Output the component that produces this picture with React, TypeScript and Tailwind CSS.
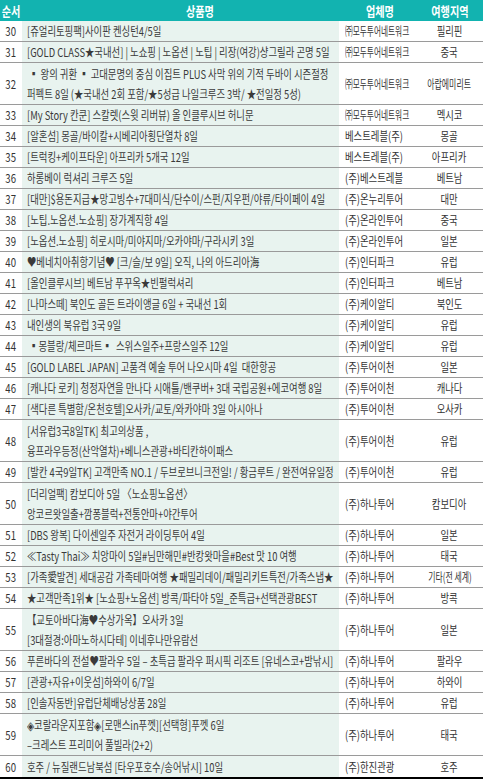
import React from 'react';

type Row = { n: number; t: string[]; c: string; r: string };

const rows: Row[] = [
    { n: 30, t: ['[쥬얼리토핑팩]사이판 켄싱턴4/5일'], c: '㈜모두투어네트워크', r: '필리핀' },
    { n: 31, t: ['[GOLD CLASS★국내선] | 노쇼핑 | 노옵션 | 노팁 | 리장(여강)샹그릴라 곤명 5일'], c: '㈜모두투어네트워크', r: '중국' },
    {
        n: 32,
        t: [' ▪ 왕의 귀환 ▪ 고대문명의 중심 이집트 PLUS 사막 위의 기적 두바이 시즌절정', '퍼펙트 8일 (★국내선 2회 포함/★5성급 나일크루즈 3박/ ★전일정 5성)'],
        c: '㈜모두투어네트워크',
        r: '아랍에미리트'
    },
    { n: 33, t: ['[My Story 칸쿤] 스칼렛(스윗 리버뷰) 올 인클루시브 허니문'], c: '㈜모두투어네트워크', r: '멕시코' },
    { n: 34, t: ['[알혼섬] 몽골/바이칼+시베리아횡단열차 8일'], c: '베스트레블(주)', r: '몽골' },
    { n: 35, t: ['[트럭킹+케이프타운] 아프리카 5개국 12일'], c: '베스트레블(주)', r: '아프리카' },
    { n: 36, t: ['하롱베이 럭셔리 크루즈 5일'], c: '(주)베스트레블', r: '베트남' },
    { n: 37, t: ['[대만]$용돈지급★망고빙수+7대미식/단수이/스펀/지우펀/야류/타이페이 4일'], c: '(주)온누리투어', r: '대만' },
    { n: 38, t: ['[노팁.노옵션.노쇼핑] 장가계직항 4일'], c: '(주)온라인투어', r: '중국' },
    { n: 39, t: ['[노옵션.노쇼핑] 히로시마/미야지마/오카야마/구라시키 3일'], c: '(주)온라인투어', r: '일본' },
    { n: 40, t: ['♥베네치아취항기념♥ [크/슬/보 9일] 오직, 나의 아드리아海'], c: '(주)인터파크', r: '유럽' },
    { n: 41, t: ['[올인클루시브] 베트남 푸꾸옥★빈펄럭셔리'], c: '(주)인터파크', r: '베트남' },
    { n: 42, t: ['[나마스떼] 북인도 골든 트라이앵글 6일 + 국내선 1회'], c: '(주)케이알티', r: '북인도' },
    { n: 43, t: ['내인생의 북유럽 3국 9일'], c: '(주)케이알티', r: '유럽' },
    { n: 44, t: [' ▪몽블랑/체르마트▪  스위스일주+프랑스일주 12일'], c: '(주)케이알티', r: '유럽' },
    { n: 45, t: ['[GOLD LABEL JAPAN] 고품격 예술 투어 나오시마 4일  대한항공'], c: '(주)투어이천', r: '일본' },
    { n: 46, t: ['[캐나다 로키] 청정자연을 만나다 시애틀/밴쿠버+ 3대 국립공원+에코여행 8일'], c: '(주)투어이천', r: '캐나다' },
    { n: 47, t: ['[색다른 특별함/온천호텔]오사카/교토/와카야마 3일 아시아나'], c: '(주)투어이천', r: '오사카' },
    { n: 48, t: ['[서유럽3국8일TK] 최고의상품 ,', '융프라우등정(산악열차)+베니스관광+바티칸하이패스'], c: '(주)투어이천', r: '유럽' },
    { n: 49, t: ['[발칸 4국9일TK] 고객만족 NO.1 / 두브로브니크전일! / 황금루트 / 완전여유일정'], c: '(주)투어이천', r: '유럽' },
    { n: 50, t: ['[더리얼팩] 캄보디아 5일 〈노쇼핑노옵션〉', '앙코르왓일출+깜퐁블럭+전통안마+야간투어'], c: '(주)하나투어', r: '캄보디아' },
    { n: 51, t: ['[DBS 왕복] 다이센일주 자전거 라이딩투어 4일'], c: '(주)하나투어', r: '일본' },
    { n: 52, t: ['≪Tasty Thai≫ 치앙마이 5일#님만해민#반캉왓마을#Best 맛 10 여행'], c: '(주)하나투어', r: '태국' },
    { n: 53, t: ['[가족愛발견] 세대공감 가족테마여행 ★패밀리데이/패밀리키트특전/가족스냅★'], c: '(주)하나투어', r: '기타(전 세계)' },
    { n: 54, t: ['★고객만족1위★ [노쇼핑+노옵션] 방콕/파타야 5일_준특급+선택관광BEST'], c: '(주)하나투어', r: '방콕' },
    { n: 55, t: ['【교토아바다海♥수상가옥】오사카 3일', '[3대절경:아마노하시다테] 이네후나만유람선'], c: '(주)하나투어', r: '일본' },
    { n: 56, t: ['푸른바다의 전설♥팔라우 5일 – 초특급 팔라우 퍼시픽 리조트 [유네스코+밤낚시]'], c: '(주)하나투어', r: '팔라우' },
    { n: 57, t: ['[관광+자유+이웃섬]하와이 6/7일'], c: '(주)하나투어', r: '하와이' },
    { n: 58, t: ['[인솔자동반]유럽단체배낭상품 28일'], c: '(주)하나투어', r: '유럽' },
    { n: 59, t: ['◈코랄라운지포함◈[로맨스in푸껫][선택형]푸껫 6일', '–크레스트 프리미어 풀빌라(2+2)'], c: '(주)하나투어', r: '태국' },
    { n: 60, t: ['호주 / 뉴질랜드남북섬 [타우포호수/송어낚시] 10일'], c: '(주)한진관광', r: '호주' }
];

const App = () => {
    return (
        <div className="w-[483px] bg-white font-['Noto_Sans_CJK_KR',sans-serif] text-[12px] text-[#333]">
            {/* header */}
            <div className="grid h-[21px] grid-cols-[22px_317px_81px_63px] items-center bg-[#12b3b0] text-[13px] font-bold text-white">
                <div className="flex justify-center">
                    <span className="inline-block origin-center scale-x-[0.78] whitespace-nowrap leading-none">순서</span>
                </div>
                <div className="flex justify-center pl-[38px]">
                    <span className="inline-block origin-center scale-x-[0.78] whitespace-nowrap leading-none">상품명</span>
                </div>
                <div className="flex justify-center">
                    <span className="inline-block origin-center scale-x-[0.78] whitespace-nowrap leading-none">업체명</span>
                </div>
                <div className="flex justify-center pr-[4px]">
                    <span className="inline-block origin-center scale-x-[0.78] whitespace-nowrap leading-none">여행지역</span>
                </div>
            </div>

            {rows.map((row, i) => {
                const last = i === rows.length - 1;
                const tall = row.t.length > 1;
                return (
                    <div
                        key={row.n}
                        className={
                            'grid grid-cols-[22px_317px_81px_63px] ' +
                            (last ? 'h-[23px] border-b-2 border-black' : tall ? 'h-[42px] border-b border-[#9a9a9a]' : 'h-[21px] border-b border-[#9a9a9a]')
                        }
                    >
                        <div className="flex items-center justify-center">
                            <span className="inline-block origin-center scale-x-[0.8] whitespace-nowrap leading-none">{row.n}</span>
                        </div>
                        <div className="flex flex-col justify-center bg-[#e8f3ef] pl-[5px] text-[#3a3a3a]">
                            {row.t.map((line, j) => (
                                <div key={j} className="h-[20px] leading-[20px]">
                                    <span className="inline-block origin-left scale-x-[0.78] whitespace-pre">{line}</span>
                                </div>
                            ))}
                        </div>
                        <div className="flex items-center pl-[6px]">
                            <span
                                className={
                                    row.c.startsWith('㈜')
                                        ? 'inline-block origin-left scale-x-[0.64] whitespace-nowrap leading-none'
                                        : 'inline-block origin-left scale-x-[0.78] whitespace-nowrap leading-none'
                                }
                            >
                                {row.c}
                            </span>
                        </div>
                        <div className="flex items-center justify-center pr-[4px]">
                            <span
                                className={
                                    row.r.length > 5
                                        ? 'inline-block origin-center scale-x-[0.66] whitespace-nowrap leading-none'
                                        : 'inline-block origin-center scale-x-[0.78] whitespace-nowrap leading-none'
                                }
                            >
                                {row.r}
                            </span>
                        </div>
                    </div>
                );
            })}
        </div>
    );
};

export default App;
